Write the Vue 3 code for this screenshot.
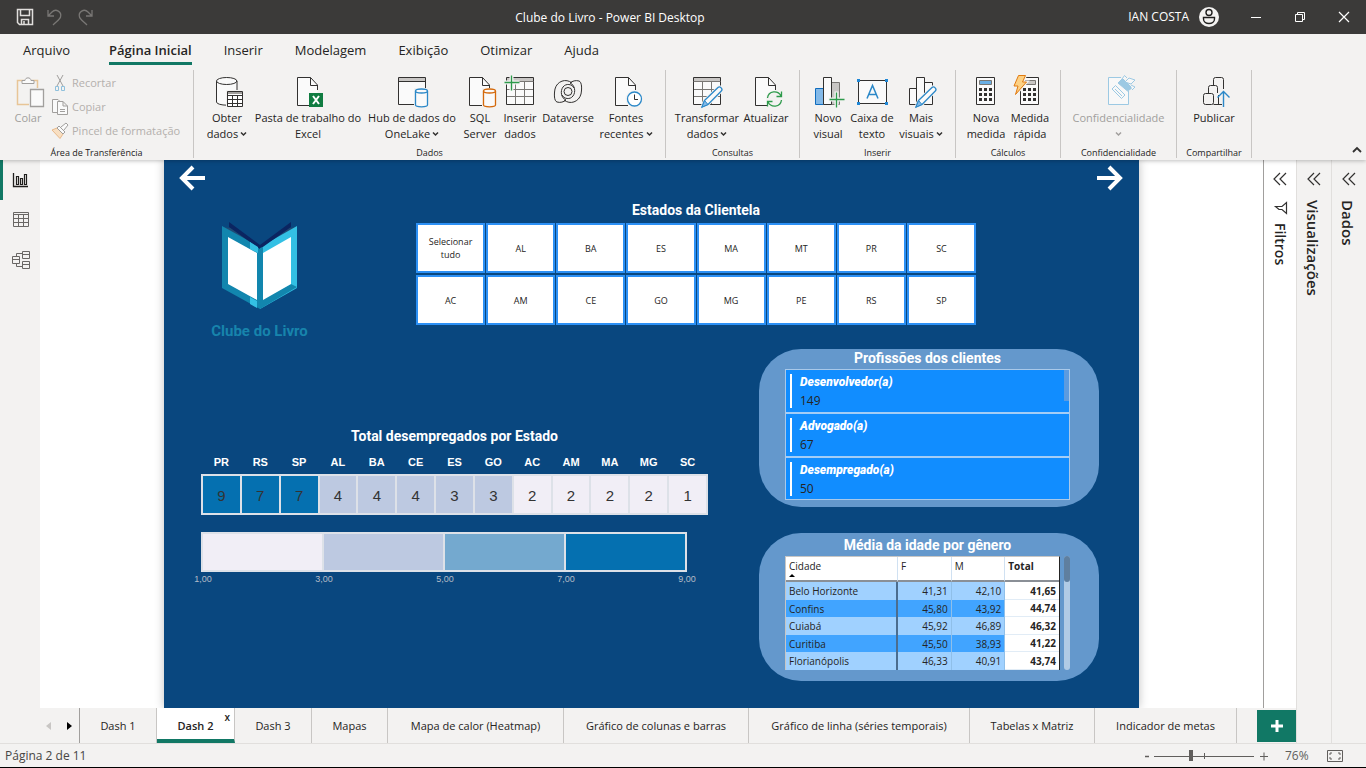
<script setup>
import { ref } from 'vue'

const menu = ['Arquivo', 'Página Inicial', 'Inserir', 'Modelagem', 'Exibição', 'Otimizar', 'Ajuda']

const page = '<path d="M5.5 1.5H18.5L25.5 8.5V29.5H5.5Z" fill="#fafafa" stroke="none"/><path d="M25.5 14V9L18.5 1.5H5.5V29.5H18M18.5 1.5V9.5H25.5" fill="none"/>'
const sheet = '<path d="M2.5 1.5H29.5V28.5H2.5Z" fill="#fafafa"/><path d="M3 2H29V5.500H3Z" fill="#c8c6c4" stroke="none"/><path d="M3 13.500H29M3 20.500H29M11.500 6V28M20.500 6V28" stroke="#797774"/><path d="M2.500 5.500H29.500" stroke="#797774"/>'
const pencil = '<path d="M11 31L13.500 24.500L27 11.500C29 9.800 32.300 13 30.300 15L17 28.500Z" fill="#f3f2f1" stroke="#f3f2f1" stroke-width="3"/><path d="M13.500 24.500L27 11.500C29 9.800 32.300 13 30.300 15L17 28.500L11 31Z" fill="#fafafa" stroke="#2b88c8" stroke-width="1.300"/><path d="M11 31L13.500 24.500L17 28.500Z" fill="#83b9e8" stroke="#2b88c8"/>'
const can = (c) => `<path d="M18 12H32V32H18Z" fill="#f3f2f1" stroke="none"/><path d="M19.500 15V29C19.500 31.400 31.500 31.400 31.500 29V15" fill="#fafafa" stroke="${c}" stroke-width="1.300"/><ellipse cx="25.500" cy="15" rx="6" ry="2" fill="#fafafa" stroke="${c}" stroke-width="1.300"/>`
const calc = (c) => `<path d="M6.500 1.500H24.500V28.500H6.500Z" fill="#fafafa"/><path d="M9.500 4.500H21.500V8.500H9.500Z" fill="${c}" stroke="#797774"/><path d="M9 13.500H22M9 18.500H22M9 23.500H22" stroke="#323130" stroke-width="3" stroke-dasharray="3 2"/>`
const plus = (x, y) => `<path d="M${x} ${y - 8}V${y + 8}M${x - 8} ${y}H${x + 8}" stroke="#f3f2f1" stroke-width="4"/><path d="M${x} ${y - 7}V${y + 8}M${x - 7} ${y}H${x + 8}" stroke="#2d9a4b" stroke-width="1.300"/>`

const icons = {
  obter: '<path d="M5.500 5V26C5.500 30 26 30.500 26 26V5" fill="#fafafa"/><ellipse cx="15.700" cy="5" rx="10.200" ry="3.500" fill="#fafafa"/><path d="M15 14H32V32H15Z" fill="#f3f2f1" stroke="none"/><path d="M16.500 15.500H31.500V30.500H16.500Z" fill="#fff"/><path d="M17 16H31V18H17Z" fill="#a19f9d" stroke="none"/><path d="M16.500 19.500H31.500M16.500 23.500H31.500M16.500 27.500H31.500M21.500 19V30M26.500 19V30"/>',
  excel: page + '<path d="M17 17H31V31H17Z" fill="#107c41" stroke="none"/><path d="M21 20L27 28M27 20L21 28" stroke="#fff" stroke-width="2"/>',
  hub: '<path d="M2.500 1.500H29.500V28.500H2.500Z" fill="#fafafa"/><path d="M3 2H29V5H3Z" fill="#c8c6c4" stroke="none"/><path d="M3 5.500H29"/>' + can('#2b88c8'),
  sql: page + can('#d4690b'),
  inserir: sheet + plus(7.5, 6.5),
  dataverse: '<g fill="none"><circle cx="16" cy="15.500" r="4"/><path d="M20 7C14 2 5 5 3 13C2 18 2 25 5 26C8 27 12 26 14 24M12 24C18 29 27 26 29 18C30 13 30 6 27 5C24 4 20 5 18 7M14 24C9 22 8 15 11 11C14 7 20 8 22 12M18 7C23 9 24 16 21 20C18 24 12 23 10 19"/></g>',
  fontes: page + '<circle cx="24.500" cy="23" r="9" fill="#f3f2f1" stroke="none"/><circle cx="24.500" cy="23" r="7" fill="#fff" stroke="#2b88c8" stroke-width="1.300"/><path d="M24.500 18.500V23.500H28" fill="none"/>',
  transformar: sheet + pencil,
  atualizar: page + '<circle cx="24.500" cy="23" r="8.500" fill="#f3f2f1" stroke="none"/><path d="M17.500 22C18.500 14.500 28 14 31 20M31.500 15.500V20.500H26.500M31.500 24C30.500 31.500 21 32 18 26M17.500 30.500V25.500H22.500" fill="none" stroke="#2d9a4b" stroke-width="1.300"/>',
  novo: '<path d="M3.500 12.500H11.500V28.500H3.500Z" fill="#83b9e8" stroke="#0f6cbd"/><path d="M19.500 6.500H27.500V28.500H19.500Z" fill="#c8c6c4" stroke="#797774"/><path d="M11.500 1.500H19.500V28.500H11.500Z" fill="#fafafa"/>' + plus(24.5, 23.5),
  caixa: '<path d="M2.500 4.500H30.500V27.500H2.500Z" fill="#fafafa"/><path d="M1 3H4V6H1ZM29 3H32V6H29ZM1 26H4V29H1ZM29 26H32V29H29Z" fill="#1f87d6" stroke="none"/><path d="M11 22.500L16.500 9.500L22 22.500M13 18.500H20" fill="none" stroke="#2b88c8" stroke-width="1.500"/>',
  mais: '<path d="M4.500 12.500H11.500V28.500H4.500ZM19.500 6.500H27.500V28.500H19.500ZM11.500 1.500H19.500V28.500H11.500Z" fill="#fafafa"/>' + pencil,
  nova: calc('#69afe5'),
  medida: calc('#c8c6c4') + '<path d="M4.500 -.5H11.500L8.500 6H12.500L1.500 18.500L4 10H0Z" fill="#fdd184" stroke="#f3f2f1" stroke-width="3"/><path d="M4.500 -.5H11.500L8.500 6H12.500L1.500 18.500L4 10H0Z" fill="#fdd184" stroke="#e07a10"/>',
  confid: '<path d="M18 1.500H5.500V28.500H25.500V15" fill="#f8f8f8" stroke="#9cc9e3"/><g fill="#f8f8f8" stroke="#9cc9e3"><path d="M9 13L12.500 9.500L22 19L18.500 22.500ZM12 13L19 20"/><path d="M15 7L19.500 2.500L29 12L24.500 15Z" fill="#9cc9e3"/><path d="M22 6L26 2L32 4L28 8ZM19 3L21.500 -.5L24 2M28 9L32 11L29 14"/></g>',
  publicar: '<g fill="none"><path d="M15.500 9V3.500Q15.500 1.500 17.500 1.500H23.500Q25.500 1.500 25.500 3.500V13M10.500 17V11.500Q10.500 9.500 12.500 9.500H17.500Q19.500 9.500 19.500 11.500V17M20.500 19V28.500H24"/><rect x="5.500" y="17.500" width="10" height="11" rx="2"/><path d="M15.500 28.500H21"/><path d="M25.500 31V15M19.500 21.500L25.500 15.500L31.500 21.500" stroke="#2b88c8" stroke-width="1.400"/></g>',
}

const groups = [
  { name: 'Dados', cls: 'g-dados', items: [
    { icon: 'obter', lines: ['Obter', 'dados'], drop: true },
    { icon: 'excel', lines: ['Pasta de trabalho do', 'Excel'] },
    { icon: 'hub', lines: ['Hub de dados do', 'OneLake'], drop: true },
    { icon: 'sql', lines: ['SQL', 'Server'] },
    { icon: 'inserir', lines: ['Inserir', 'dados'] },
    { icon: 'dataverse', lines: ['Dataverse'] },
    { icon: 'fontes', lines: ['Fontes', 'recentes'], drop: true },
  ] },
  { name: 'Consultas', cls: 'g-consultas', items: [
    { icon: 'transformar', lines: ['Transformar', 'dados'], drop: true },
    { icon: 'atualizar', lines: ['Atualizar'] },
  ] },
  { name: 'Inserir', cls: 'g-inserir', items: [
    { icon: 'novo', lines: ['Novo', 'visual'] },
    { icon: 'caixa', lines: ['Caixa de', 'texto'] },
    { icon: 'mais', lines: ['Mais', 'visuais'], drop: true },
  ] },
  { name: 'Cálculos', cls: 'g-calculos', items: [
    { icon: 'nova', lines: ['Nova', 'medida'] },
    { icon: 'medida', lines: ['Medida', 'rápida'] },
  ] },
  { name: 'Confidencialidade', cls: 'g-confid', items: [
    { icon: 'confid', lines: ['Confidencialidade', ''], drop: true, off: true },
  ] },
  { name: 'Compartilhar', cls: 'g-publicar', items: [
    { icon: 'publicar', lines: ['Publicar'] },
  ] },
]

const states = ['Selecionar tudo', 'AL', 'BA', 'ES', 'MA', 'MT', 'PR', 'SC', 'AC', 'AM', 'CE', 'GO', 'MG', 'PE', 'RS', 'SP']

const unemployed = [
  ['PR', 9], ['RS', 7], ['SP', 7], ['AL', 4], ['BA', 4], ['CE', 4], ['ES', 3],
  ['GO', 3], ['AC', 2], ['AM', 2], ['MA', 2], ['MG', 2], ['SC', 1],
]
const level = (n) => (n >= 7 ? 'l4' : n >= 5 ? 'l3' : n >= 3 ? 'l2' : 'l1')
const scale = ['1,00', '3,00', '5,00', '7,00', '9,00']

const jobs = [['Desenvolvedor(a)', 149], ['Advogado(a)', 67], ['Desempregado(a)', 50]]

const ages = [
  ['Belo Horizonte', '41,31', '42,10', '41,65'],
  ['Confins', '45,80', '43,92', '44,74'],
  ['Cuiabá', '45,92', '46,89', '46,32'],
  ['Curitiba', '45,50', '38,93', '41,22'],
  ['Florianópolis', '46,33', '40,91', '43,74'],
]

const tabs = ['Dash 1', 'Dash 2', 'Dash 3', 'Mapas', 'Mapa de calor (Heatmap)', 'Gráfico de colunas e barras', 'Gráfico de linha (séries temporais)', 'Tabelas x Matriz', 'Indicador de metas']
const active = ref('Dash 2')
const zoom = ref(76)
</script>

<template>
  <div class="app">
    <header class="titlebar">
      <div class="quick">
        <button aria-label="Salvar">
          <svg width="18" height="18" viewBox="0 0 18 18" fill="none" stroke="#e1dfdd" stroke-width="1.500"><path d="M1.500 1.500H16.500V16.500H3.500L1.500 14.500ZM4.500 2V7.500H13.500V2M5.500 16V11.500H12.500V16M8 13V16" /></svg>
        </button>
        <button aria-label="Desfazer">
          <svg width="18" height="18" viewBox="0 0 18 18" fill="none" stroke="#797775" stroke-width="1.300"><path d="M2 2V8H8M2 8L6 4C10 0 16 4 14.500 9C14 11 11 13 7 17" /></svg>
        </button>
        <button aria-label="Refazer">
          <svg width="18" height="18" viewBox="0 0 18 18" fill="none" stroke="#797775" stroke-width="1.300"><path d="M16 2V8H10M16 8L12 4C8 0 2 4 3.500 9C4 11 7 13 11 17" /></svg>
        </button>
      </div>
      <h1>Clube do Livro - Power BI Desktop</h1>
      <div class="account">
        <button class="user">IAN COSTA
          <svg width="20" height="20" viewBox="0 0 20 20"><circle cx="10" cy="10" r="10" fill="#f3f2f1" /><g fill="none" stroke="#201f1e" stroke-width="1.400"><circle cx="10" cy="5.500" r="3" /><path d="M4.500 10.500H15.500V12C15.500 18 4.500 18 4.500 12Z" /></g></svg>
        </button>
        <button class="win" aria-label="Minimizar"><svg width="12" height="12" viewBox="0 0 12 12"><path d="M1 6.500H11" stroke="#fff" /></svg></button>
        <button class="win" aria-label="Restaurar"><svg width="12" height="12" viewBox="0 0 12 12" fill="none" stroke="#fff"><path d="M1.500 3.500H8.500V10.500H1.500ZM3.500 3V1.500H10.500V8.500H9" /></svg></button>
        <button class="win" aria-label="Fechar"><svg width="12" height="12" viewBox="0 0 12 12"><path d="M1 1L11 11M11 1L1 11" stroke="#fff" stroke-width="1.200" /></svg></button>
      </div>
    </header>

    <nav class="menu">
      <button v-for="m in menu" :key="m" :class="{ on: m === 'Página Inicial' }">{{ m }}</button>
    </nav>

    <section class="ribbon">
      <div class="group g-clip">
        <div class="clip">
          <button class="tool off" disabled>
            <svg width="32" height="32" viewBox="0 0 32 32" fill="none" stroke="#a19f9d"><path d="M12 4.500H5.500V28.500H17M20 4.500H25.500V12" stroke="#e8c597" stroke-width="1.500" /><path d="M10 6.500V4.500H13C13 1 19 1 19 4.500H22V7.500H10Z" fill="#fafafa" /><path d="M18.500 13.500H31.500V30.500H18.500Z" fill="#fafafa" stroke-width="1.300" /></svg>
            <span>Colar</span>
          </button>
          <div class="clip-list">
            <button disabled>
              <svg width="18" height="18" viewBox="0 0 18 18" fill="none" stroke="#a19f9d"><path d="M6 1L12 12M12 1L6 12" /><path d="M4.500 12.500H7.500V16.500H4.500ZM10.500 12.500H13.500V16.500H10.500Z" stroke="#8fc0dc" /></svg>Recortar
            </button>
            <button disabled>
              <svg width="18" height="18" viewBox="0 0 18 18" fill="#fafafa" stroke="#a19f9d"><path d="M7 14.500H1.500V1.500H7L9 3.500" /><path d="M6.500 3.500H12L16.500 8V16.500H6.500ZM12 3.500V8H16.500M9 11.500H14M9 13.500H14" /></svg>Copiar
            </button>
            <button disabled>
              <svg width="18" height="18" viewBox="0 0 18 18" fill="none" stroke="#a19f9d"><path d="M1 8L6 6L12 12L9 16.500Z" fill="#f8dfc2" stroke="#e8b98a" /><path d="M6 6L8 4L14 10L12 12ZM10 5L15 1L17 3L13 8" fill="#fafafa" /></svg>Pincel de formatação
            </button>
          </div>
        </div>
        <div class="group-name">Área de Transferência</div>
      </div>
      <div v-for="g in groups" :key="g.name" class="group" :class="g.cls">
        <div class="tools">
          <button v-for="t in g.items" :key="t.icon" class="tool" :class="{ off: t.off }">
            <svg class="ico" width="32" height="32" viewBox="0 0 32 32" stroke="#323130" v-html="icons[t.icon]"></svg>
            <span v-for="(l, i) in t.lines" :key="i">{{ l }}<svg v-if="t.drop && i === 1" class="chev" width="7" height="6" viewBox="0 0 7 6"><path d="M1 1.500L3.500 4L6 1.500" /></svg></span>
          </button>
        </div>
        <div class="group-name">{{ g.name }}</div>
      </div>
      <button class="collapse" aria-label="Recolher faixa"><svg width="10" height="8" viewBox="0 0 10 8"><path d="M1 6L5 2L9 6" fill="none" stroke="#323130" stroke-width="1.800" /></svg></button>
    </section>

    <div class="body">
      <div class="work">
        <div class="middle">
          <aside class="rail">
            <button class="on" aria-label="Relatório"><svg width="20" height="20" viewBox="0 0 20 20" fill="none" stroke="#201f1e"><path d="M3.500 3V16.500H18" stroke-width="1.300" /><path d="M6.500 14.500V6.500H8.500V14.500ZM10.500 14.500V8.500H12.500V14.500ZM14.500 14.500V4.500H16.500V14.500Z" stroke-width="1.200" /></svg></button>
            <button aria-label="Tabela"><svg width="20" height="20" viewBox="0 0 20 20" fill="none" stroke="#696765"><path d="M3.500 2.500H18.500V16.500H3.500ZM3.500 4.500H18.500M3.500 8.500H18.500M3.500 12.500H18.500M8.500 4V16M13.500 4V16" /></svg></button>
            <button aria-label="Modelo"><svg width="20" height="20" viewBox="0 0 20 20" fill="none" stroke="#696765"><path d="M2.500 6.500H9.500V13.500H2.500ZM2.500 9.500H9.500M12.500 1.500H19.500V8.500H12.500ZM12.500 4.500H19.500M12.500 11.500H19.500V18.500H12.500ZM12.500 14.500H19.500M6.500 6V3.500H12M6.500 14V16.500H12" /></svg></button>
          </aside>
          <main class="canvas">
            <article class="report">
              <div class="arrows">
                <button aria-label="Voltar"><svg width="28" height="28" viewBox="0 0 28 28"><path d="M26 14H4M14 3L3 14L14 25" /></svg></button>
                <button aria-label="Avançar"><svg width="28" height="28" viewBox="0 0 28 28"><path d="M2 14H24M14 3L25 14L14 25" /></svg></button>
              </div>

              <div class="top">
                <div class="logo">
                  <svg width="76" height="88" viewBox="0 0 76 88">
                    <path d="M0 5L38 25L8 1V6Z" fill="#1f4a74" /><path d="M75 5L38 25L68 1V6Z" fill="#1f4a74" />
                    <path d="M0 4L38 25V87L0 66Z" fill="#1286ae" />
                    <path d="M75 4L38 25V87L75 66Z" fill="#33c0e4" />
                    <path d="M7 0L38 23V27L7 5ZM69 0L38 23V27L69 5Z" fill="#0b2561" />
                    <path d="M38 26L41 25V77L69 62L75 65L38 87Z" fill="#1286ae" />
                    <path d="M28 20L36 25V31L28 27ZM28 75L35 79V86L28 82Z" fill="#33c0e4" />
                    <path d="M6 15L35 31V78L6 62ZM69 15L41 31V78L69 62Z" fill="#fff" />
                  </svg>
                  <p>Clube do Livro</p>
                </div>
                <section class="slicer">
                  <h2>Estados da Clientela</h2>
                  <div class="tiles">
                    <button v-for="s in states" :key="s">{{ s }}</button>
                  </div>
                </section>
              </div>

              <div class="bottom">
                <section class="heat">
                  <h2>Total desempregados por Estado</h2>
                  <table class="cells">
                    <thead><tr><th v-for="u in unemployed" :key="u[0]">{{ u[0] }}</th></tr></thead>
                    <tbody><tr><td v-for="u in unemployed" :key="u[0]" :class="level(u[1])">{{ u[1] }}</td></tr></tbody>
                  </table>
                  <div class="legend"><i class="l1"></i><i class="l2"></i><i class="l3"></i><i class="l4"></i></div>
                  <div class="ticks"><span v-for="s in scale" :key="s">{{ s }}</span></div>
                </section>
                <div class="cards">
                  <section class="card">
                    <h2>Profissões dos clientes</h2>
                    <ul class="jobs">
                      <li v-for="j in jobs" :key="j[0]"><div><b>{{ j[0] }}</b><span>{{ j[1] }}</span></div></li>
                    </ul>
                  </section>
                  <section class="card card-age">
                    <h2>Média da idade por gênero</h2>
                    <div class="matrix">
                      <table class="ages">
                        <colgroup><col class="c-city"><col><col><col></colgroup>
                        <thead><tr><th>Cidade<svg width="6" height="3" viewBox="0 0 6 3"><path d="M0 3L3 0L6 3Z" /></svg></th><th>F</th><th>M</th><th class="tot">Total</th></tr></thead>
                        <tbody>
                          <tr v-for="a in ages" :key="a[0]"><td v-for="(c, i) in a" :key="i" :class="{ tot: i === 3 }">{{ c }}</td></tr>
                        </tbody>
                      </table>
                      <div class="scroll"><i></i></div>
                    </div>
                  </section>
                </div>
              </div>
            </article>
          </main>
          <aside class="pane filters">
            <button aria-label="Expandir filtros"><svg width="14" height="14" viewBox="0 0 14 14"><path d="M7 1L1 7L7 13M13 1L7 7L13 13" /></svg></button>
            <svg class="funnel" width="14" height="14" viewBox="0 0 14 14"><path d="M12.500 1.500V12.500L8 8.500H5L1.500 5.500H8Z" /></svg>
            <h3>Filtros</h3>
          </aside>
        </div>
        <footer class="pages">
          <button class="step" aria-label="Página anterior"><svg width="5" height="8" viewBox="0 0 5 8"><path d="M5 0V8L0 4Z" fill="#c8c6c4" /></svg></button>
          <button class="step" aria-label="Próxima página"><svg width="5" height="8" viewBox="0 0 5 8"><path d="M0 0V8L5 4Z" fill="#000" /></svg></button>
          <div class="tabs">
            <button v-for="t in tabs" :key="t" :class="{ on: t === active }" @click="active = t">{{ t }}<span v-if="t === active" class="x">x</span></button>
          </div>
          <button class="add" aria-label="Nova página"><svg width="12" height="12" viewBox="0 0 12 12"><path d="M6 0V12M0 6H12" stroke="#fff" stroke-width="3" /></svg></button>
        </footer>
      </div>
      <aside class="pane">
        <button aria-label="Expandir visualizações"><svg width="14" height="14" viewBox="0 0 14 14"><path d="M7 1L1 7L7 13M13 1L7 7L13 13" /></svg></button>
        <h3>Visualizações</h3>
      </aside>
      <aside class="pane">
        <button aria-label="Expandir dados"><svg width="14" height="14" viewBox="0 0 14 14"><path d="M7 1L1 7L7 13M13 1L7 7L13 13" /></svg></button>
        <h3>Dados</h3>
      </aside>
    </div>

    <div class="status">
      <span>Página 2 de 11</span>
      <div class="zoom">
        <button aria-label="Reduzir"><svg width="8" height="8" viewBox="0 0 8 8"><path d="M2 4.500H6" stroke="#605e5c" stroke-width="1.500" /></svg></button>
        <input v-model="zoom" type="range" min="10" max="190" aria-label="Zoom">
        <button aria-label="Ampliar"><svg width="8" height="8" viewBox="0 0 8 8"><path d="M0 4.500H8M4 .5V8.500" stroke="#605e5c" /></svg></button>
        <span class="pct">{{ zoom }}%</span>
        <button aria-label="Ajustar à página"><svg width="16" height="12" viewBox="0 0 16 12" fill="none" stroke="#605e5c"><path d="M.5 .5H15.500V11.500H.5Z" /><path d="M3 5V3H5M11 3H13V5M13 7V9H11M5 9H3V7" /></svg></button>
      </div>
    </div>
  </div>
</template>

<style>
body { margin: 0; }
</style>

<style scoped>
* { box-sizing: border-box; }
.app {
  display: flex;
  flex-direction: column;
  height: 100vh;
  background: #f3f2f1;
  color: #252423;
  font: 12px/16px "Open Sans", "Noto Sans", sans-serif;
  border-bottom: 1px solid #000;
}
button { border: 0; padding: 0; background: none; color: inherit; font: inherit; white-space: nowrap; }
h1, h2, h3, p, ul { margin: 0; padding: 0; }
svg { display: block; flex: none; overflow: visible; }

.titlebar { display: flex; align-items: center; height: 34px; background: #3b3a39; color: #fff; flex: none; }
.quick { display: flex; gap: 12px; width: 104px; padding-left: 16px; }
h1 { flex: 1; text-align: center; font-size: 12px; font-weight: 400; padding-top: 2px; }
.account { display: flex; width: 250px; justify-content: flex-end; }
.user { display: flex; align-items: center; gap: 10px; margin-right: 15px; }
.win { display: grid; place-items: center; width: 44px; height: 34px; }

.menu { display: flex; gap: 32px; height: 34px; padding-left: 23px; font-size: 13px; line-height: 18px; flex: none; }
.menu button { margin: 7px 0 3px; border-bottom: 3px solid transparent; padding-bottom: 3px; }
.menu button:first-child { margin-right: 7px; }
.menu .on { font-weight: 600; border-color: #117865; }

.ribbon { position: relative; display: flex; height: 92px; padding-top: 2px; flex: none; z-index: 2; background: #f3f2f1; box-shadow: 0 1px 4px rgba(0, 0, 0, 0.25); clip-path: inset(0 0 -8px 0); }
.group { display: flex; flex-direction: column; height: 88px; border-right: 1px solid #c8c6c4; }
.group-name { font-size: 9px; line-height: 10px; text-align: center; white-space: nowrap; }
.tools { display: grid; flex: 1; align-items: start; }
.g-clip { width: 194px; }
.g-dados { width: 472px; }
.g-dados .tools { grid-template-columns: 50px 112px 96px 40px 40px 56px 60px; padding-left: 8px; }
.g-consultas { width: 134px; }
.g-consultas .tools { grid-template-columns: 66px 52px; padding-left: 8px; }
.g-inserir { width: 156px; }
.g-inserir .tools { grid-template-columns: 44px 44px 54px; padding-left: 6px; }
.g-calculos { width: 105px; }
.g-calculos .tools { grid-template-columns: 44px 44px; padding-left: 8px; }
.g-confid { width: 116px; }
.g-publicar { width: 75px; }
.tool { display: flex; flex-direction: column; align-items: center; padding-top: 6px; font-size: 11px; line-height: 16px; }
.tool span { display: flex; align-items: center; justify-content: center; gap: 2px; height: 16px; }
.tool .ico, .tool > svg { margin-bottom: 2px; }
.chev path { fill: none; stroke: #323130; stroke-width: 1.5; }
.off { color: #a19f9d; }
.off .chev path { stroke: #a19f9d; }
.clip { display: flex; flex: 1; align-items: flex-start; padding-left: 12px; color: #b3b0ad; }
.clip .tool { width: 32px; }
.clip-list { display: flex; flex-direction: column; gap: 6px; padding: 4px 0 0 7px; font-size: 11px; }
.clip-list button { display: flex; align-items: center; gap: 3px; height: 18px; }
.collapse { margin-left: auto; align-self: flex-end; padding: 0 4px 6px 0; }

.body { display: flex; flex: 1; min-height: 0; }
.work { display: flex; flex-direction: column; flex: 1; min-width: 0; }
.middle { display: flex; flex: 1; min-height: 0; }
.rail { width: 40px; flex: none; }
.rail button { display: grid; place-items: center; width: 40px; height: 40px; border-left: 3px solid transparent; padding-right: 3px; }
.rail .on { border-color: #117865; }
.canvas { display: flex; justify-content: center; flex: 1; min-width: 0; background: #fff; overflow: hidden; }
.report { display: flex; flex-direction: column; height: 100%; aspect-ratio: 975 / 548; background: #09477f; color: #fff; box-shadow: 0 0 9px rgba(0, 0, 0, 0.25); }
h2 { font: 700 14px/16px Roboto, sans-serif; text-align: center; white-space: nowrap; }
.arrows { display: flex; align-items: flex-start; justify-content: space-between; padding: 4px 16px 0 15px; height: 42px; }
.arrows path { fill: none; stroke: #fff; stroke-width: 4; }
.top { display: flex; height: 147px; }
.logo { display: flex; flex-direction: column; align-items: center; width: 191px; padding-top: 20px; }
.logo p { margin-top: 11px; color: #1784ac; font: 700 15px/20px Roboto, sans-serif; }
.slicer { width: 560px; margin-left: 61px; }
.tiles { display: grid; grid-template-columns: repeat(8, 1fr); gap: 2px 1px; margin-top: 5px; }
.tiles button { height: 50px; padding: 0 8px; background: #fff; border: 2px solid #2c90f5; color: #252423; font-size: 9px; line-height: 13px; white-space: normal; }

.bottom { display: flex; justify-content: space-between; padding: 0 40px 0 37px; }
.heat { width: 507px; padding-top: 79px; }
.cells { width: 100%; margin-top: 10px; table-layout: fixed; border-collapse: collapse; }
.cells th { height: 21px; padding: 0 0 5px; font: 700 11px/14px "Liberation Sans", Arial, sans-serif; }
.cells td { height: 39px; padding: 2px 0 0; border: 2px solid #dde1e8; color: #333; text-align: center; font: 15px/18px "Liberation Sans", Arial, sans-serif; }
.l1 { background: #f1eef6; }
.l2 { background: #bdc9e1; }
.l3 { background: #74a9cf; }
.l4 { background: #0570b0; }
.legend { display: flex; width: 486px; height: 40px; margin-top: 17px; border: 1px solid #dde1e8; }
.legend i { flex: 1; border: 1px solid #dde1e8; }
.ticks { display: flex; justify-content: space-between; width: 528px; margin: 1px 0 0 -20px; color: #b4bcc8; font: 9px/12px "Liberation Sans", Arial, sans-serif; }
.ticks span { width: 44px; text-align: center; }

.cards { display: flex; flex-direction: column; gap: 26px; width: 340px; }
.card { height: 158px; padding: 1px 29px 0 26px; border-radius: 42px; background: #6498cc; }
.card-age { height: 148px; padding-top: 4px; }
.jobs { list-style: none; margin-top: 3px; border: 1px solid #a9c9ea; background: linear-gradient(#5b9be0, #5b9be0) right top / 5px 31px no-repeat, #118dff; }
.jobs li { height: 44px; padding: 4px; border-bottom: 2px solid #a4cdf6; }
.jobs li:last-child { height: 41px; border: 0; }
.jobs div { display: flex; flex-direction: column; gap: 3px; height: 34px; border-left: 2px solid #fff; padding-left: 8px; line-height: 16px; color: #252423; }
.jobs b { color: #fff; font: italic 900 12px/16px Roboto, sans-serif; }

.matrix { display: flex; gap: 4px; margin-top: 3px; }
.ages { width: 275px; table-layout: fixed; border-collapse: separate; border-spacing: 0; font-size: 10px; line-height: 12px; color: #252423; border: 1px solid #c8c6c4; border-width: 1px 0 0 1px; border-right: 1px solid #252423; }
.c-city { width: 112px; }
.ages th { height: 25px; padding: 3px 3px 0; text-align: left; vertical-align: top; font-weight: 400; background: #fff; border-right: 1px solid #d0e1f2; border-bottom: 2px solid #8a8f96; }
.ages th svg { margin-top: 2px; }
.ages td { height: 17px; padding: 0 3px; text-align: right; background: #41a4ff; border-right: 1px solid #8fbfe9; }
.ages tr:nth-child(odd) td { height: 18px; background: #a0d1ff; }
.ages td:first-child { text-align: left; border-right: 2px solid #4b6d8f; }
.ages tbody tr .tot, .ages tbody tr:nth-child(odd) .tot { background: #fff; border-bottom: 1px solid #e1ecf6; }
.ages .tot { font-weight: 700; border-right: 0; }
.scroll { width: 6px; border-radius: 3px; background: #b1cbe5; }
.scroll i { display: block; height: 26px; border-radius: 3px; background: #5f7f9f; }

.pane { display: flex; flex-direction: column; align-items: center; width: 35px; flex: none; padding-top: 12px; border-left: 1px solid #e1dfdd; }
.pane path { fill: none; stroke: #323130; stroke-width: 1.2; }
.pane h3 { margin: 14px 3px 0 0; font-size: 15px; line-height: 18px; font-weight: 600; writing-mode: vertical-rl; white-space: nowrap; }
.filters { width: 33px; background: #fff; border-left: 1px solid #a19f9d; }
.funnel { margin: 15px 0 0 2px; }
.filters h3 { margin: 8px 0 0; font-size: 14px; }

.pages { display: flex; height: 35px; padding-left: 40px; flex: none; }
.step { width: 17px; display: grid; place-items: center; }
.step + .step { margin: 0 1px 0 4px; }
.tabs { display: grid; grid-template-columns: 77px 78px 77px 76px 176px 185px 221px 125px 142px; border-left: 1px solid #a19f9d; }
.tabs button { position: relative; border-right: 1px solid #c8c6c4; font-size: 11px; }
.tabs .on { background: #fff; border-bottom: 4px solid #117865; padding-top: 4px; font-weight: 600; }
.x { position: absolute; right: 4px; top: 1px; font-size: 10px; }
.add { display: grid; place-items: center; width: 39px; height: 32px; margin: 2px 0 0 auto; background: #117865; }

.status { display: flex; justify-content: space-between; align-items: center; height: 24px; padding: 0 23px 0 5px; border-top: 1px solid #e1dfdd; color: #484644; font-size: 12px; flex: none; }
.zoom { display: flex; align-items: center; gap: 3px; color: #605e5c; }
.zoom input { appearance: none; width: 100px; height: 12px; margin: 0 3px 0 0; background: linear-gradient(#605e5c, #605e5c) 50px 3px / 1px 6px no-repeat, linear-gradient(#605e5c, #605e5c) 0 6px / 100% 1px no-repeat; }
.zoom input::-webkit-slider-thumb { appearance: none; width: 4px; height: 11px; background: #605e5c; }
.pct { width: 38px; padding-left: 14px; margin-right: 15px; font-size: 12px; }
</style>
